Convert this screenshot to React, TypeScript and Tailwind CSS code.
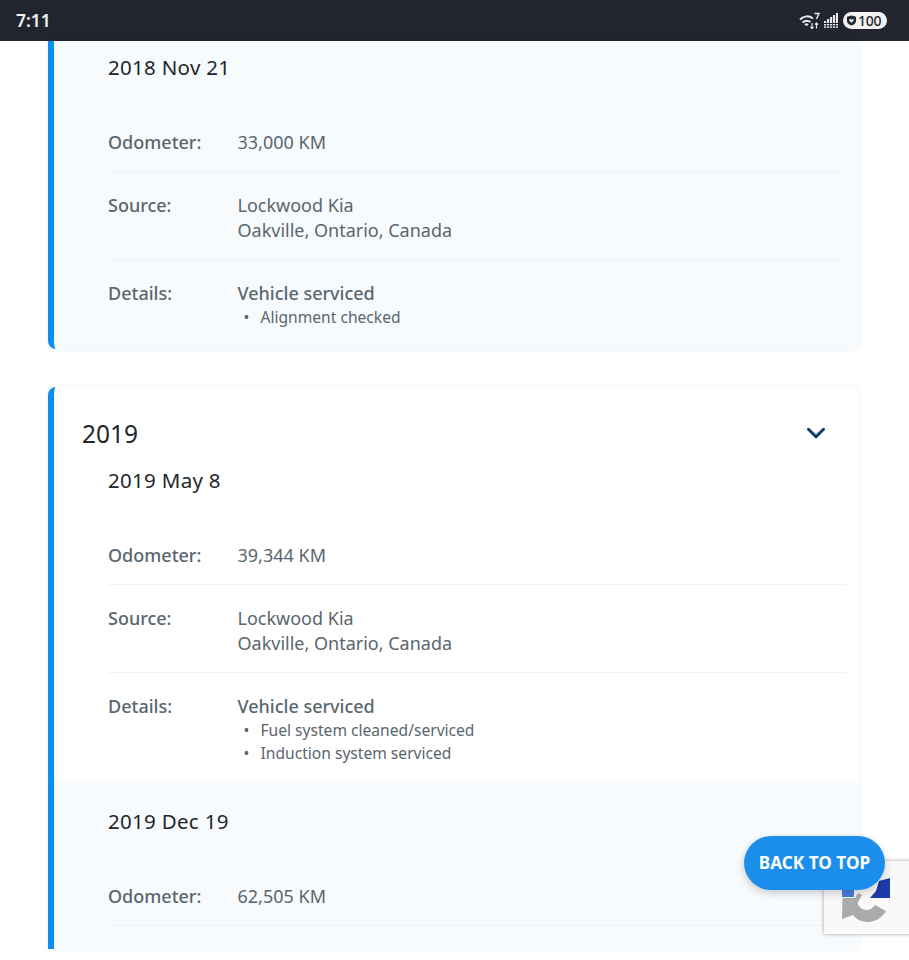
import { ChevronDown } from "lucide-react";

type Entry = {
  date: string;
  odometer: string;
  details?: string[];
};

function Row({ label, border = true, children }: { label: string; border?: boolean; children: React.ReactNode }) {
  return (
    <div className={`flex pt-[21px] pb-[15px] ${border ? "border-b border-[#f1f4f6]" : ""}`}>
      <div className="w-[129.5px] shrink-0 text-[18px] leading-[25px] font-medium text-[#5a666e]">{label}</div>
      <div className="text-[18px] leading-[25.5px] text-[#5a666e]">{children}</div>
    </div>
  );
}

function ServiceEntry({ entry, topPad }: { entry: Entry; topPad: string }) {
  return (
    <div className={`pb-[1px] pl-[54px] pr-[13px] ${topPad}`}>
      <div className="mb-[28px] text-[20.5px] leading-[27px] tracking-[0.3px] text-[#22272b]">{entry.date}</div>
      <Row label="Odometer:">{entry.odometer}</Row>
      {entry.details && (
        <>
          <Row label="Source:">
            Lockwood Kia
            <br />
            Oakville, Ontario, Canada
          </Row>
          <Row label="Details:" border={false}>
            <div className="font-medium">Vehicle serviced</div>
            <ul className="text-[15.6px] leading-[23px]">
              {entry.details.map((d) => (
                <li key={d} className="flex">
                  <span className="w-[23px] shrink-0 pl-[6px]">•</span>
                  {d}
                </li>
              ))}
            </ul>
          </Row>
        </>
      )}
    </div>
  );
}

function StatusIcons() {
  return (
    <div className="flex items-center gap-[4px]">
      <svg width="21" height="17" viewBox="0 0 21 17" fill="none" stroke="#e8e9eb" strokeWidth="2">
        <path d="M1 7.500C5 3.500 10 3.500 14 6.500" />
        <path d="M3.500 10.500C6 8.300 9 8.300 11.500 10" />
        <path d="M6 13C7 12.200 8 12.200 9 13" />
        <path d="M15.500 1.500H20L17.500 7" strokeWidth="1.400" />
        <path d="M13 11v5.500M11.500 15 13 16.500l1.500-1.500M17.500 16.500V11M16 12.500 17.500 11l1.500 1.500" strokeWidth="1.200" />
      </svg>
      <svg width="14" height="15" viewBox="0 0 14 15" fill="#e8e9eb">
        {[
          [0, 8],
          [3, 6],
          [6, 4],
          [9, 2],
          [12, 0],
        ].map(([x, y]) => (
          <g key={x}>
            <rect x={x} y={y} width="2.200" height={10 - y} />
            <rect x={x} y="11" width="2.200" height="1.400" />
            <rect x={x} y="13.400" width="2.200" height="1.400" />
          </g>
        ))}
      </svg>
      <div className="ml-[1px] flex h-[17px] w-[44px] items-center gap-[1px] rounded-full bg-[#f2f2f3] pl-[3px] text-[14px] font-medium text-[#23262f]">
        <svg width="11" height="11" viewBox="0 0 12 12" fill="#23262f">
          <path d="M6 .5 11 2v4c0 3-2.200 4.600-5 5.500C3.200 10.600 1 9 1 6V2z" />
          <path d="M6 8.500 3.700 6.200c-.9-1.300.9-2.600 2.300-1.100 1.400-1.500 3.200-.2 2.300 1.100z" fill="#f2f2f3" />
        </svg>
        <span className="tracking-[-0.3px]">100</span>
      </div>
    </div>
  );
}

function RecaptchaBadge() {
  return (
    <div className="absolute left-[824px] top-[861px] h-[73px] w-[90px] bg-[#f9f9f9] shadow-[0_0_4px_rgba(0,0,0,0.35)]">
      <svg className="absolute left-[17px] top-[16px]" width="52" height="46" viewBox="0 0 52 46">
        <path d="M49 1V21H29L35 14 38 4Z" fill="#1c3aa9" />
        <path d="M1 8H13V20H1Z" fill="#4a7bdc" />
        <path
          d="M1.500 21H14L17 16 21 18 16.500 26C18 30 21 33 25 33 29 33 32 31 34 28L45 34C41 41 34 45 27 45 21 45 16 43 12 38L1 42Z"
          fill="#ababab"
        />
      </svg>
    </div>
  );
}

export default function App() {
  const font = { fontFamily: '"Noto Sans", sans-serif' };
  return (
    <div style={font} className="relative h-[960px] w-[909px] overflow-hidden bg-white">
      <div className="flex h-[41px] items-center justify-between bg-[#22252f] pl-[16px] pr-[22px]">
        <span className="text-[17.5px] font-semibold text-[#f2f2f3]">7:11</span>
        <StatusIcons />
      </div>

      <div className="ml-[48px] mr-[50px] flex flex-col gap-[38px]">
        <section className="overflow-hidden rounded-b-[8px] border-l-[6px] border-[#0d8ff0] bg-[#f7fbfe] pb-[4px] shadow-[0_1px_4px_rgba(0,40,90,0.08)]">
          <ServiceEntry
            topPad="pt-[13px]"
            entry={{ date: "2018 Nov 21", odometer: "33,000 KM", details: ["Alignment checked"] }}
          />
        </section>

        <section className="overflow-hidden rounded-t-[8px] border-l-[6px] border-[#0d8ff0] shadow-[0_0_4px_rgba(0,40,90,0.08)]">
          <div className="flex items-center justify-between pl-[28px] pr-[28px] pt-[31px]">
            <h2 className="text-[24.5px] leading-[32px] text-[#22272b]">2019</h2>
            <ChevronDown className="-mt-[3px] h-[30px] w-[30px] text-[#0b3a66]" strokeWidth={2.4} />
          </div>
          <ServiceEntry
            topPad="pt-[17px]"
            entry={{
              date: "2019 May 8",
              odometer: "39,344 KM",
              details: ["Fuel system cleaned/serviced", "Induction system serviced"],
            }}
          />
          <div className="bg-[#f7fbfe] pb-[22px]">
            <ServiceEntry topPad="pt-[27px]" entry={{ date: "2019 Dec 19", odometer: "62,505 KM" }} />
          </div>
        </section>
      </div>

      <RecaptchaBadge />
      <button className="absolute left-[744px] top-[836px] flex h-[54px] w-[141px] items-center justify-center rounded-full bg-[#1a8eea] pb-[1px] text-[17.2px] font-bold text-white shadow-[0_3px_8px_rgba(0,0,0,0.2)]">
        BACK TO TOP
      </button>
    </div>
  );
}
